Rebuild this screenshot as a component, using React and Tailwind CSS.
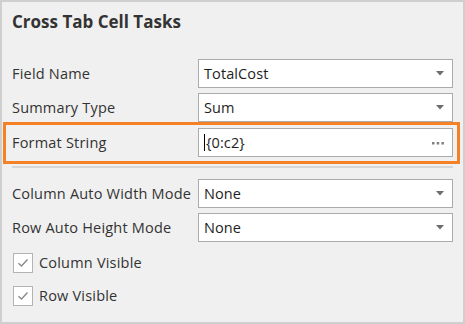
import React from "react";

const font = { fontFamily: '"Open Sans", "Noto Sans", Arial, sans-serif' };

function Arrow() {
  return (
    <svg width="8" height="5" viewBox="0 0 8 5" className="shrink-0">
      <path d="M0 0 H8 L4 4.5 Z" fill="#6d6d6d" />
    </svg>
  );
}

function Dots() {
  return (
    <svg width="12" height="4" viewBox="0 0 12 4" className="shrink-0">
      <rect x="0" y="1" width="2.5" height="2.5" fill="#808080" />
      <rect x="4.7" y="1" width="2.5" height="2.5" fill="#808080" />
      <rect x="9.4" y="1" width="2.5" height="2.5" fill="#808080" />
    </svg>
  );
}

function Field({ value, kind, caret }) {
  return (
    <div className="flex h-[29px] w-[255px] items-center justify-between border border-[#ababab] bg-white pl-[5px] pr-[8px]">
      <span className="flex items-center text-[14.5px] tracking-[0.1px] text-[#1e1e1e]">
        {caret && <span className="mr-[1px] inline-block h-[17px] w-[1px] bg-black" />}
        {value}
      </span>
      {kind === "dots" ? <Dots /> : <Arrow />}
    </div>
  );
}

function Row({ label, children }) {
  return (
    <div className="flex h-[29px] items-center justify-between">
      <span className="text-[14.5px] tracking-[0.2px] text-[#333333]">{label}</span>
      {children}
    </div>
  );
}

function Check({ label }) {
  return (
    <div className="flex h-[20px] items-center gap-[6px] pl-[1px]">
      <div className="flex h-[20px] w-[20px] items-center justify-center border border-[#b4b4b4] bg-white">
        <svg width="12" height="10" viewBox="0 0 12 10">
          <path d="M1.5 5.2 L4.5 8 L10.5 1.5" fill="none" stroke="#8a8a8a" strokeWidth="1.4" />
        </svg>
      </div>
      <span className="text-[14.5px] tracking-[0.2px] text-[#333333]">{label}</span>
    </div>
  );
}

export default function App() {
  return (
    <div
      style={font}
      className="flex h-[324px] w-[465px] flex-col border-2 border-[#cfcfcf] bg-[#f0f0f0]"
    >
      <div className="px-[10px] pt-[7px] text-[17px] font-bold leading-[26px] text-[#333333]">
        Cross Tab Cell Tasks
      </div>
      <div className="mt-[24px] flex flex-col gap-[5px] px-[10px]">
        <Row label="Field Name">
          <Field value="TotalCost" />
        </Row>
        <Row label="Summary Type">
          <Field value="Sum" />
        </Row>
      </div>
      <div className="ml-[1px] mr-[3px] border-[3px] border-[#f58126] pb-[4px] pl-[6px] pr-[4px] pt-[3px]">
        <Row label="Format String">
          <Field value="{0:c2}" kind="dots" caret />
        </Row>
      </div>
      <div className="mx-[10px] mt-[2px] h-[2px] bg-[#d6d6d6]" />
      <div className="mt-[11px] flex flex-col gap-[5px] px-[10px]">
        <Row label="Column Auto Width Mode">
          <Field value="None" />
        </Row>
        <Row label="Row Auto Height Mode">
          <Field value="None" />
        </Row>
      </div>
      <div className="mt-[11px] flex flex-col gap-[13px] px-[10px]">
        <Check label="Column Visible" />
        <Check label="Row Visible" />
      </div>
    </div>
  );
}
